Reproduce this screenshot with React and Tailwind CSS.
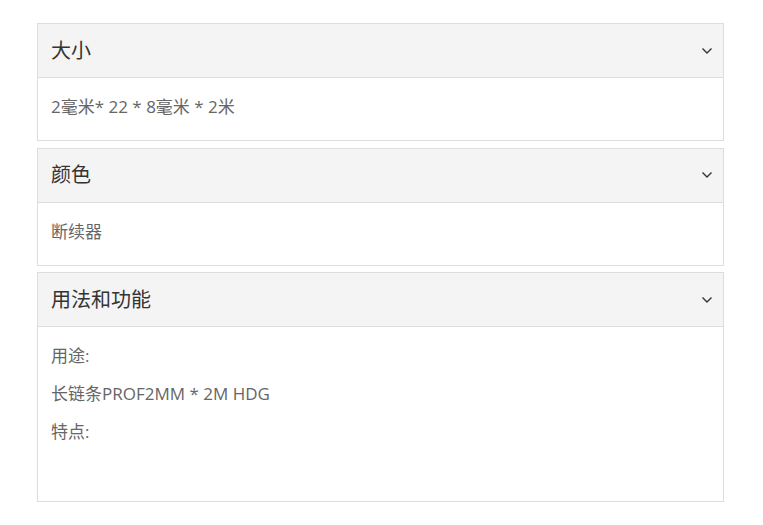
import React, { useState } from 'react';

const sections = [
  { title: '大小', lines: ['2毫米* 22 * 8毫米 * 2米'] },
  { title: '颜色', lines: ['断续器'] },
  { title: '用法和功能', lines: ['用途:', '长链条PROF2MM * 2M HDG', '特点:'], spacer: true },
];

const Chevron = () => (
  <svg width="12" height="8" viewBox="0 0 12 8" fill="none" className="text-[#333]">
    <path d="M1.5 1.5 L6 6 L10.5 1.5" stroke="currentColor" strokeWidth="1.4" />
  </svg>
);

const Panel = ({ title, lines, spacer }) => {
  const [open, setOpen] = useState(true);
  return (
    <div className="border border-[#dddddd] bg-white mb-[6.5px]">
      <button
        onClick={() => setOpen(!open)}
        className="w-full h-[53px] bg-[#f4f4f4] flex items-center justify-between pl-[13px] pr-[10px] text-left"
      >
        <span className="text-[20px] text-[#333]">{title}</span>
        <Chevron />
      </button>
      {open && (
        <div className="border-t border-[#dddddd] pt-[17px] pb-[7px] pl-[13px]">
          {lines.map((l, i) => (
            <p key={i} className="text-[17px] leading-[24px] mb-[14px] text-[#666]">{l}</p>
          ))}
          {spacer && <div className="h-[36px]" />}
        </div>
      )}
    </div>
  );
};

export default function App() {
  return (
    <div
      className="w-[763px] h-[525px] bg-white pt-[23px] pl-[37px]"
      style={{ fontFamily: '"Open Sans", "Noto Sans CJK SC", sans-serif' }}
    >
      <div className="w-[687px]">
        {sections.map((s) => (
          <Panel key={s.title} {...s} />
        ))}
      </div>
    </div>
  );
}
